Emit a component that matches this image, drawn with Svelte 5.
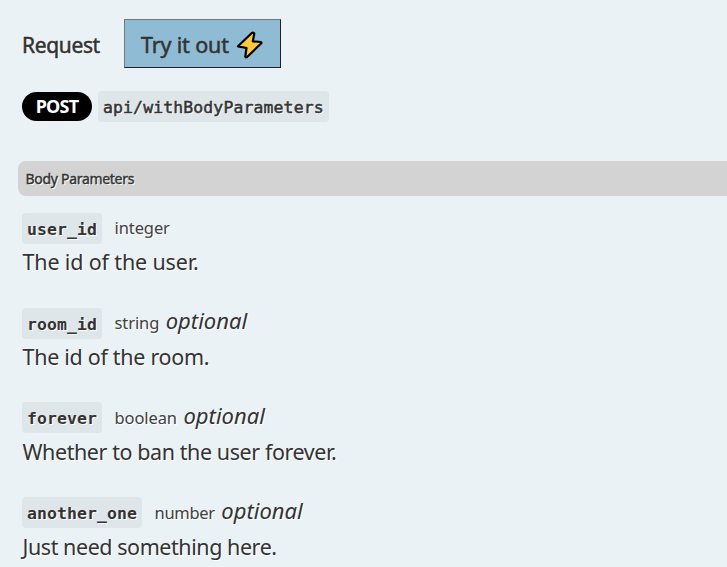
<script>
  const params = [
    { name: 'user_id', type: 'integer', optional: false, text: 'The id of the user.', kind: 'p0' },
    { name: 'room_id', type: 'string', optional: true, text: 'The id of the room.', kind: 'p1' },
    { name: 'forever', type: 'boolean', optional: true, text: 'Whether to ban the user forever.', kind: 'p2' },
    { name: 'another_one', type: 'number', optional: true, text: 'Just need something here.', kind: 'p3' }
  ];
</script>

<main>
  <header>
    <span class="request">Request</span>
    <button>
      <span class="try">Try it out</span>
      <svg width="27" height="28" viewBox="0 0 27 28">
        <path d="M15.8 2 L2 15.3 L10.5 17 L9.3 25.6 Q9.8 27 11.3 25.8 L25.3 12.3 Q25.8 11.3 24.7 11 L16.8 10.3 L18.3 2.8 Q17.5 1 15.8 2 Z" fill="#ffc83d" stroke="#000" stroke-width="2.2" stroke-linejoin="round" />
      </svg>
    </button>
  </header>
  <div class="endpoint">
    <span class="post">POST</span>
    <code>api/withBodyParameters</code>
  </div>
  <h4>Body Parameters</h4>
  {#each params as p}
    <section class={p.kind}>
      <div class="head">
        <code>{p.name}</code>
        <small>{p.type}</small>
        {#if p.optional}<i>optional</i>{/if}
      </div>
      <p>{p.text}</p>
    </section>
  {/each}
</main>

<style>
  :global(body) { background: #eaf2f6; overflow: hidden; }
  main {
    height: 567px;
    box-sizing: border-box;
    overflow: hidden;
    padding: 19px 0 0 22px;
    background: #eaf2f6;
    color: #333;
    font-family: "Noto Sans", sans-serif;
    text-shadow: 1px 1px 0 #fff;
    white-space: nowrap;
  }
  header { display: flex; align-items: center; height: 49px; }
  .request { width: 102px; padding-top: 3px; font-size: 21px; letter-spacing: -0.35px; -webkit-text-stroke: 0.5px #333; }
  button {
    display: flex;
    align-items: center;
    box-sizing: border-box;
    width: 157px;
    height: 49px;
    margin: 0;
    padding: 2px 0 0 16px;
    border: 1px solid;
    border-color: #767676 #212121 #212121 #767676;
    background: #8fbcd4;
    color: #333;
    font: 21.5px "Noto Sans", sans-serif;
    text-align: left;
    text-shadow: none;
  }
  .try { width: 95px; letter-spacing: -0.15px; -webkit-text-stroke: 0.5px #333; }
  svg { flex: none; }
  .endpoint { display: flex; align-items: center; height: 31px; margin-top: 23px; }
  .post {
    width: 70px;
    height: 29px;
    margin-right: 6px;
    border-radius: 15px;
    background: #000;
    color: #fff;
    font-size: 18px;
    font-weight: 700;
    line-height: 29px;
    text-align: center;
    letter-spacing: -0.8px;
    text-shadow: none;
  }
  code {
    height: 31px;
    padding: 0 5px;
    border-radius: 4px;
    background: #dfe6e9;
    font: 700 16.5px/32px "DejaVu Sans Mono", monospace;
    letter-spacing: 0.07px;
  }
  .endpoint code { font-weight: 400; letter-spacing: 0.1px; line-height: 33px; -webkit-text-stroke: 0.5px #333; }
  h4 {
    height: 35px;
    margin: 39px 0 17px -4px;
    padding-left: 7.5px;
    border-radius: 8px 0 0 8px;
    background: #d3d3d3;
    font-size: 14px;
    font-weight: 400;
    line-height: 36px;
    letter-spacing: -0.3px;
    -webkit-text-stroke: 0.4px #333;
  }
  section { height: 95px; }
  .head { display: flex; height: 31px; line-height: 30px; }
  .head code { line-height: 33px; }
  .p2 code, .p3 code { margin-top: -1px; }
  small { margin-left: 12.5px; font-size: 16.5px; color: #404040; letter-spacing: -0.1px; }
  .p3 small { letter-spacing: -0.3px; }
  i { margin: -3px 0 0 6.5px; font-size: 22px; letter-spacing: 0; }
  p { margin: 1px 0 0 0.5px; font-size: 21.5px; line-height: 34px; }
  .p0 p { letter-spacing: -0.15px; }
  .p1 p { letter-spacing: -0.3px; }
  .p2 p { letter-spacing: -0.42px; }
  .p3 p { letter-spacing: -0.44px; }
</style>
